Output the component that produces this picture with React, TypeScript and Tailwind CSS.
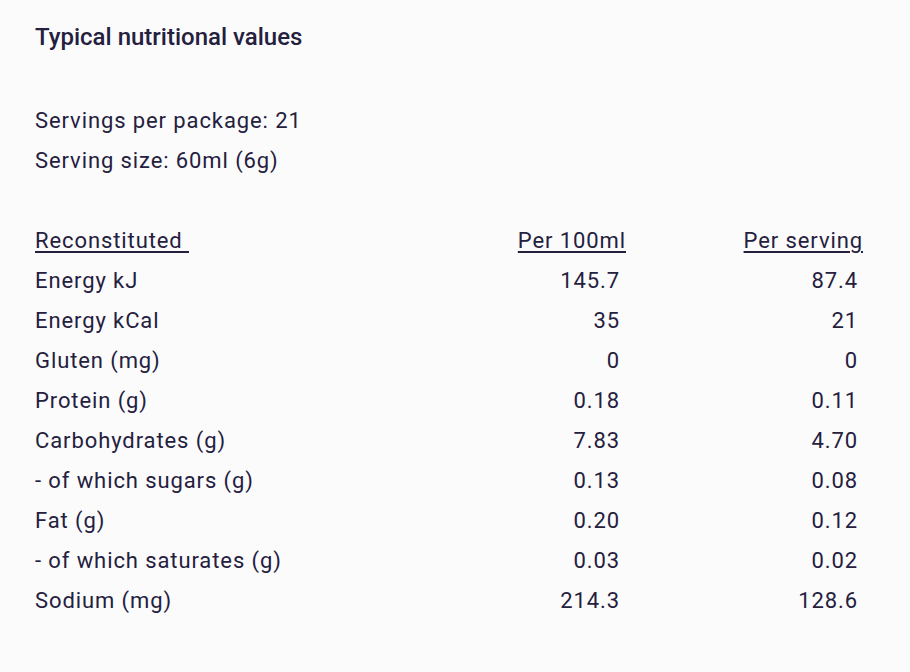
const rows: [string, string, string][] = [
  ["Energy kJ", "145.7", "87.4"],
  ["Energy kCal", "35", "21"],
  ["Gluten (mg)", "0", "0"],
  ["Protein (g)", "0.18", "0.11"],
  ["Carbohydrates (g)", "7.83", "4.70"],
  ["- of which sugars (g)", "0.13", "0.08"],
  ["Fat (g)", "0.20", "0.12"],
  ["- of which saturates (g)", "0.03", "0.02"],
  ["Sodium (mg)", "214.3", "128.6"],
];

export default function App() {
  return (
    <div className="min-h-[672px] w-[910px] bg-[#fbfbfc] pl-[35px] pt-[23px] font-['Roboto',sans-serif] text-[#24203e]">
      <h2 className="text-[24px] font-medium leading-[28px]">
        Typical nutritional values
      </h2>
      <div className="mt-[50px] text-[22px] leading-[40px] tracking-[0.9px]">
        <p>Servings per package: 21</p>
        <p>Serving size: 60ml (6g)</p>
      </div>
      <div className="mt-[40px] text-[22px] leading-[40px] tracking-[0.9px]">
        <div className="flex">
          <span className="w-[480px] underline decoration-[1.5px] underline-offset-[3px]">
            Reconstituted&nbsp;
          </span>
          <span className="w-[111px] text-right underline decoration-[1.5px] underline-offset-[3px]">
            Per 100ml
          </span>
          <span className="ml-[116px] w-[121px] text-right underline decoration-[1.5px] underline-offset-[3px]">
            Per serving
          </span>
        </div>
        {rows.map(([label, per100, perServing]) => (
          <div key={label} className="flex">
            <span className="w-[480px]">{label}</span>
            <span className="w-[111px] pr-[6px] text-right">{per100}</span>
            <span className="ml-[116px] w-[121px] pr-[5px] text-right">{perServing}</span>
          </div>
        ))}
      </div>
    </div>
  );
}
